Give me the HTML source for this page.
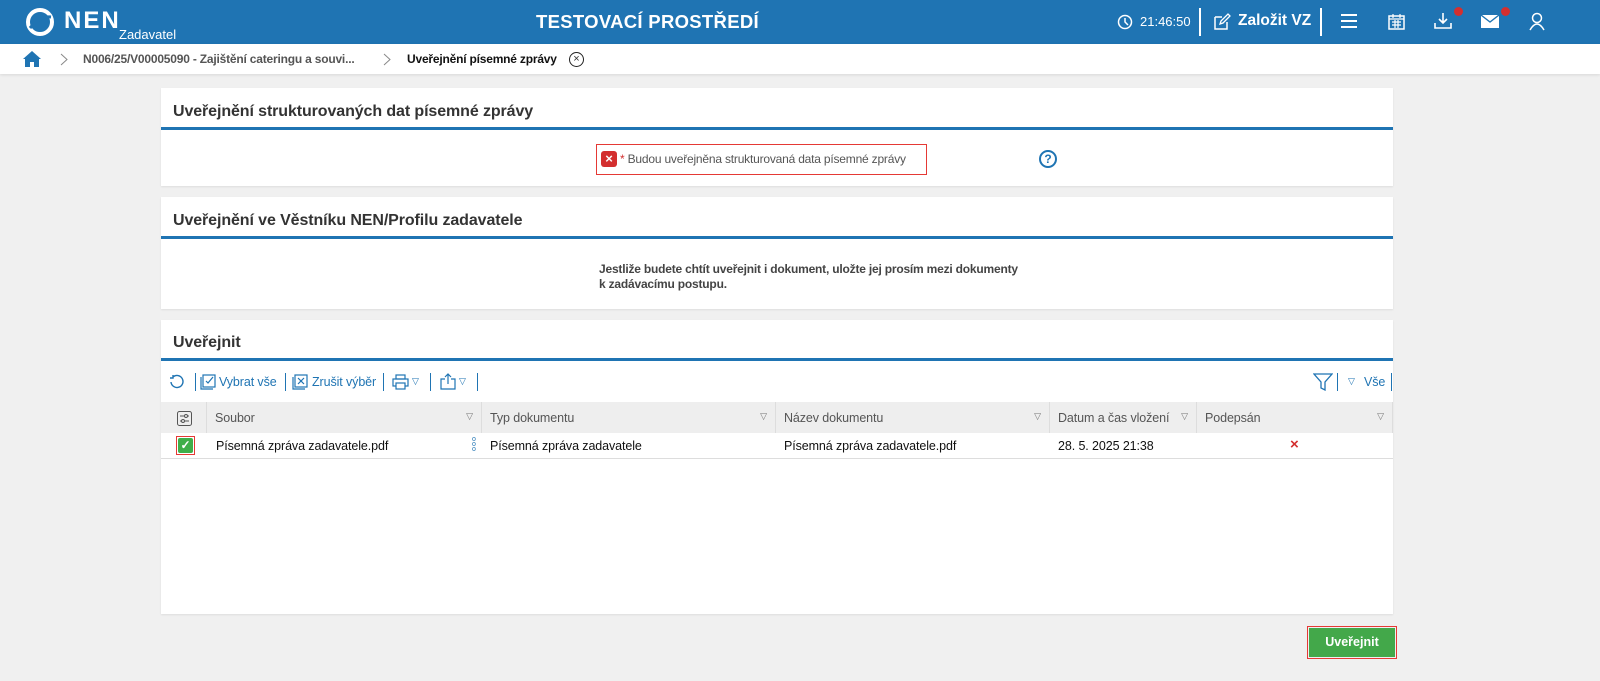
<!DOCTYPE html><html><head><meta charset="utf-8"><style>
*{box-sizing:border-box;margin:0;padding:0}
body{width:1600px;height:681px;background:#f0f0f0;font-family:"Liberation Sans",sans-serif;position:relative;overflow:hidden;color:#333}
.hdr{position:absolute;left:0;top:0;width:1600px;height:44px;background:#1f74b3;color:#fff}
.bc{position:absolute;left:0;top:44px;width:1600px;height:30px;background:#fff;box-shadow:0 1px 3px rgba(0,0,0,.1)}
.a{position:absolute;white-space:nowrap}
.panel{position:absolute;left:161px;width:1232px;background:#fff;box-shadow:0 1px 2px rgba(0,0,0,.08)}
.pt{position:absolute;left:12px;font-size:16px;font-weight:bold;color:#333;letter-spacing:-.1px}
.line{position:absolute;left:0;width:1232px;height:3px;background:#1f74b3}
.th{position:absolute;top:402px;height:31px;background:#eee;border-right:1px solid #ddd;font-size:12.5px;color:#555;padding:9px 8px;letter-spacing:-.1px}
.th span{position:absolute;right:8px;top:9px;font-size:9px;color:#777}
.td{position:absolute;top:439px;font-size:12.5px;color:#111;letter-spacing:-.1px}
.tb{color:#1f74b3;font-size:12.5px;letter-spacing:-.1px}
</style></head><body>
<div class="hdr">
<svg class="a" style="left:25px;top:8px" width="30" height="28" viewBox="0 0 30 28"><circle cx="15" cy="14" r="12" fill="none" stroke="#fff" stroke-width="4"/><path d="M5 20 Q15 8 26 9" stroke="#1f74b3" stroke-width="3" fill="none"/></svg>
<div class="a" style="left:64px;top:7px;font-size:24px;font-weight:bold;letter-spacing:2px">NEN</div>
<div class="a" style="left:119px;top:27px;font-size:13px">Zadavatel</div>
<div class="a" style="left:536px;top:11px;font-size:18.5px;font-weight:bold;letter-spacing:.3px">TESTOVACÍ PROSTŘEDÍ</div>
<svg class="a" style="left:1117px;top:14px" width="16" height="16"><circle cx="8" cy="8" r="6.5" fill="none" stroke="#fff" stroke-width="1.5"/><path d="M8 4v4l3 3" stroke="#fff" stroke-width="1.5" fill="none"/></svg>
<div class="a" style="left:1140px;top:14px;font-size:13px">21:46:50</div>
<div class="a" style="left:1199px;top:8px;width:2px;height:28px;background:#fff"></div>
<svg class="a" style="left:1213px;top:13px" width="18" height="18"><path d="M2 4h7M2 4v12h12V9" stroke="#fff" stroke-width="1.5" fill="none"/><path d="M7 11l1-3 7-7 2 2-7 7z" stroke="#fff" stroke-width="1.3" fill="none"/></svg>
<div class="a" style="left:1238px;top:12px;font-size:15.5px;font-weight:bold">Založit VZ</div>
<div class="a" style="left:1320px;top:8px;width:2px;height:28px;background:#fff"></div>
<svg class="a" style="left:1341px;top:14px" width="16" height="14"><path d="M0 1h16M0 7h16M0 13h16" stroke="#fff" stroke-width="2"/></svg>
<svg class="a" style="left:1388px;top:13px" width="17" height="17"><rect x="1" y="3" width="15" height="13" fill="none" stroke="#fff" stroke-width="1.5"/><path d="M1 6h15M5 1v4M12 1v4M4 9h9M4 12h9M7 7v8M10 7v8" stroke="#fff" stroke-width="1.2"/></svg>
<svg class="a" style="left:1434px;top:12px" width="18" height="18"><path d="M9 1v10M5 7l4 4 4-4M1 11v5h16v-5" stroke="#fff" stroke-width="1.6" fill="none"/></svg>
<div class="a" style="left:1454px;top:7px;width:9px;height:9px;border-radius:50%;background:#d32f2f"></div>
<svg class="a" style="left:1481px;top:15px" width="18" height="13"><rect width="18" height="13" fill="#fff"/><path d="M0 0l9 7 9-7" stroke="#1f74b3" stroke-width="1.3" fill="none"/></svg>
<div class="a" style="left:1501px;top:7px;width:9px;height:9px;border-radius:50%;background:#d32f2f"></div>
<svg class="a" style="left:1529px;top:12px" width="16" height="19"><circle cx="8" cy="6" r="4.5" fill="none" stroke="#fff" stroke-width="1.5"/><path d="M1 18q7-12 14 0" fill="none" stroke="#fff" stroke-width="1.5"/></svg>
</div>
<div class="bc">
<svg class="a" style="left:23px;top:7px" width="18" height="16"><path d="M9 0L0 8h2v8h5v-5h4v5h5V8h2z" fill="#1f74b3"/></svg>
<svg class="a" style="left:60px;top:9px" width="8" height="13"><path d="M1 1l6 5.5L1 12" stroke="#888" fill="none"/></svg>
<div class="a" style="left:83px;top:8px;color:#555;font-size:12px;font-weight:bold;letter-spacing:-.2px">N006/25/V00005090 - Zajištění cateringu a souvi...</div>
<svg class="a" style="left:383px;top:9px" width="8" height="13"><path d="M1 1l6 5.5L1 12" stroke="#888" fill="none"/></svg>
<div class="a" style="left:407px;top:8px;color:#111;font-size:12px;font-weight:bold;letter-spacing:-.2px">Uveřejnění písemné zprávy</div>
<div class="a" style="left:569px;top:8px;width:15px;height:15px;border:1.3px solid #222;border-radius:50%;font-size:11px;line-height:12px;text-align:center">×</div>
</div>
<div class="panel" style="top:88px;height:98px">
<div class="pt" style="top:15px">Uveřejnění strukturovaných dat písemné zprávy</div>
<div class="line" style="top:39px"></div>
<div class="a" style="left:435px;top:56px;width:331px;height:31px;border:1px solid #e53935"></div>
<div class="a" style="left:440px;top:63px;width:16px;height:16px;background:#d32f2f;border-radius:3px;color:#fff;font-size:13px;font-weight:bold;line-height:16px;text-align:center">×</div>
<div class="a" style="left:459px;top:64px;font-size:12px;color:#555;letter-spacing:-.2px"><span style="color:#d32f2f">*</span> Budou uveřejněna strukturovaná data písemné zprávy</div>
<div class="a" style="left:878px;top:62px;width:18px;height:18px;border:2px solid #1f74b3;border-radius:50%;color:#1f74b3;font-size:12px;font-weight:bold;line-height:14px;text-align:center">?</div>
</div>
<div class="panel" style="top:197px;height:112px">
<div class="pt" style="top:15px">Uveřejnění ve Věstníku NEN/Profilu zadavatele</div>
<div class="line" style="top:39px"></div>
<div class="a" style="left:438px;top:65px;font-size:12px;color:#444;font-weight:bold;line-height:15px;letter-spacing:-.2px">Jestliže budete chtít uveřejnit i dokument, uložte jej prosím mezi dokumenty<br>k zadávacímu postupu.</div>
</div>
<div class="panel" style="top:320px;height:294px">
<div class="pt" style="top:14px">Uveřejnit</div>
<div class="line" style="top:38px"></div>
</div>
<svg class="a" style="left:168px;top:374px" width="17" height="17"><path d="M3 8a6 6 0 1 0 2-5M5 1v3H2" stroke="#1f74b3" stroke-width="1.4" fill="none"/></svg>
<div class="a" style="left:195px;top:373px;width:1px;height:18px;background:#1f74b3"></div>
<svg class="a" style="left:200px;top:374px" width="16" height="16"><rect x="3" y="1" width="12" height="12" fill="none" stroke="#1f74b3" stroke-width="1.2"/><path d="M1 3v12h12M6 7l2 2 5-6" stroke="#1f74b3" stroke-width="1.2" fill="none"/></svg>
<div class="a tb" style="left:219px;top:375px">Vybrat vše</div>
<div class="a" style="left:285px;top:373px;width:1px;height:18px;background:#1f74b3"></div>
<svg class="a" style="left:292px;top:374px" width="16" height="16"><rect x="3" y="1" width="12" height="12" fill="none" stroke="#1f74b3" stroke-width="1.2"/><path d="M1 3v12h12M6 4l6 6M12 4l-6 6" stroke="#1f74b3" stroke-width="1.2" fill="none"/></svg>
<div class="a tb" style="left:312px;top:375px">Zrušit výběr</div>
<div class="a" style="left:383px;top:373px;width:1px;height:18px;background:#1f74b3"></div>
<svg class="a" style="left:392px;top:374px" width="17" height="16"><rect x="1" y="5" width="15" height="7" fill="none" stroke="#1f74b3" stroke-width="1.2"/><rect x="4" y="1" width="9" height="4" fill="none" stroke="#1f74b3" stroke-width="1.2"/><rect x="4" y="9" width="9" height="6" fill="#fff" stroke="#1f74b3" stroke-width="1.2"/></svg>
<div class="a tb" style="left:412px;top:376px;font-size:9px">▽</div>
<div class="a" style="left:430px;top:373px;width:1px;height:18px;background:#1f74b3"></div>
<svg class="a" style="left:440px;top:373px" width="16" height="17"><path d="M5 6H1v10h14V6h-4M8 11V1M5 4l3-3 3 3" stroke="#1f74b3" stroke-width="1.2" fill="none"/></svg>
<div class="a tb" style="left:459px;top:376px;font-size:9px">▽</div>
<div class="a" style="left:477px;top:373px;width:1px;height:18px;background:#1f74b3"></div>
<svg class="a" style="left:1313px;top:373px" width="20" height="18"><path d="M1 1h18l-7 8v8l-4-2V9z" stroke="#1f74b3" stroke-width="1.3" fill="none"/></svg>
<div class="a" style="left:1337px;top:373px;width:1px;height:18px;background:#1f74b3"></div>
<div class="a tb" style="left:1348px;top:376px;font-size:9px">▽</div>
<div class="a tb" style="left:1364px;top:375px">Vše</div>
<div class="a" style="left:1391px;top:373px;width:1px;height:18px;background:#1f74b3"></div>
<div class="th" style="left:161px;width:46px"><svg width="15" height="15" style="margin-left:8px"><rect x=".5" y=".5" width="14" height="14" rx="2" fill="none" stroke="#555"/><path d="M3 5h9M3 10h9" stroke="#555"/><circle cx="9" cy="5" r="1.5" fill="#eee" stroke="#555"/><circle cx="6" cy="10" r="1.5" fill="#eee" stroke="#555"/></svg></div>
<div class="th" style="left:207px;width:275px">Soubor<span>▽</span></div>
<div class="th" style="left:482px;width:294px">Typ dokumentu<span>▽</span></div>
<div class="th" style="left:776px;width:274px">Název dokumentu<span>▽</span></div>
<div class="th" style="left:1050px;width:147px">Datum a čas vložení<span>▽</span></div>
<div class="th" style="left:1197px;width:196px">Podepsán<span>▽</span></div>
<div class="a" style="left:161px;top:458px;width:1232px;height:1px;background:#ddd"></div>
<div class="a" style="left:176px;top:436px;width:19px;height:19px;border:1px solid #e53935;padding:1px"><div style="width:15px;height:15px;background:#3fae49;border-radius:2px;color:#fff;font-size:12px;line-height:15px;text-align:center;font-weight:bold">✓</div></div>
<div class="td" style="left:216px">Písemná zpráva zadavatele.pdf</div>
<div class="a" style="left:472px;top:437px;color:#1f74b3;font-size:7px;line-height:5px">o<br>o<br>o</div>
<div class="td" style="left:490px">Písemná zpráva zadavatele</div>
<div class="td" style="left:784px">Písemná zpráva zadavatele.pdf</div>
<div class="td" style="left:1058px">28. 5. 2025 21:38</div>
<div class="a" style="left:1290px;top:436px;color:#d32f2f;font-size:15px;font-weight:bold">×</div>
<div class="a" style="left:1307px;top:626px;width:90px;height:33px;border:1px solid #e53935;padding:1px"><div style="background:#43a84a;height:29px;color:#fff;font-size:12.5px;font-weight:bold;line-height:29px;text-align:center">Uveřejnit</div></div>
</body></html>
